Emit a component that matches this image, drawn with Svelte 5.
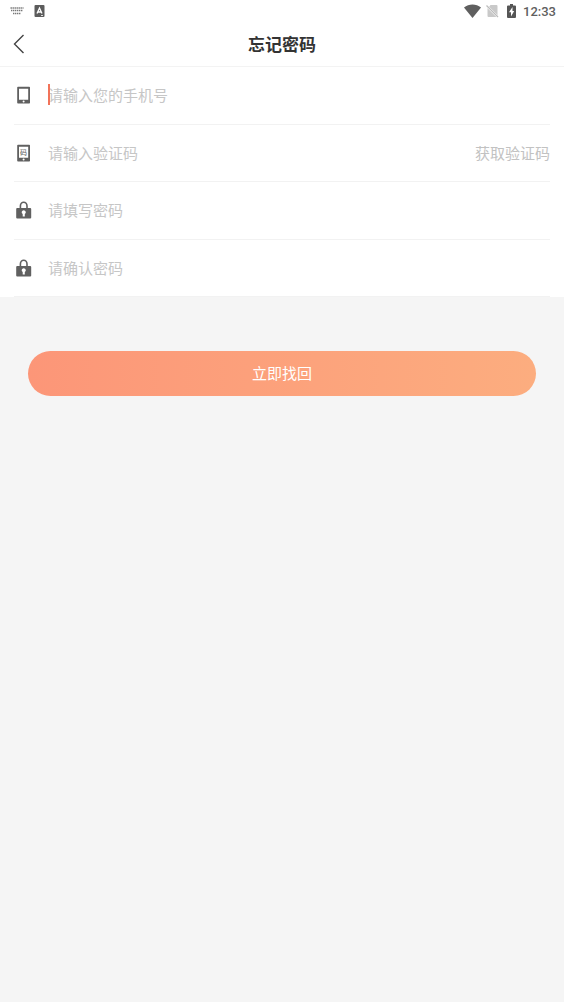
<script lang="ts">
  type Field = { id: string; label: string; type: string; icon: string; value: string };

  let fields = $state<Field[]>([
    { id: 'phone', label: '请输入您的手机号', type: 'tel', icon: 'phone', value: '' },
    { id: 'code', label: '请输入验证码', type: 'text', icon: 'code', value: '' },
    { id: 'password', label: '请填写密码', type: 'password', icon: 'lock', value: '' },
    { id: 'confirm', label: '请确认密码', type: 'password', icon: 'lock', value: '' }
  ]);
</script>

<div class="status">
  <svg width="14" height="8" viewBox="0 0 14 8" aria-hidden="true">
    <path d="M0.5 1h13M1 3.5h12M3 6.5h8" fill="none" stroke="#777" stroke-width="1.5" stroke-dasharray="1.4 .6" />
  </svg>
  <svg class="letter" width="11" height="12" viewBox="0 0 11 12" aria-hidden="true">
    <rect x=".5" width="10" height="12" rx="1" fill="#5c5c5c" />
    <path d="M3 8.5 5.5 3 8 8.5M3.8 7h3.4" fill="none" stroke="#fff" stroke-width="1.3" />
    <path d="M7 10.5h2" stroke="#ddd" />
  </svg>
  <span class="spacer"></span>
  <svg width="17" height="14" viewBox="0 0 17 14" aria-hidden="true">
    <path d="M0 3.6C4.8-.5 12.2-.5 17 3.6L8.5 14z" fill="#5f5f5f" />
  </svg>
  <svg class="signal" width="13" height="14" viewBox="0 0 13 14" aria-hidden="true">
    <path d="M4.5 1H10.5q1 0 1 1V11.5L3 3zM1.5 4 10.5 13H2.5q-1 0-1-1z" fill="#c9c9c9" />
    <path d="M1.5 2.500 12 13" stroke="#fff" stroke-width="1.800" />
    <path d="M.5 1.500 12 13" stroke="#bbb" stroke-width="1.200" />
  </svg>
  <svg class="battery" width="9" height="14" viewBox="0 0 9 14" aria-hidden="true">
    <path d="M3 0h3v1.5h2q1 0 1 1V13q0 1-1 1H1q-1 0-1-1V2.5q0-1 1-1h2z" fill="#565656" />
    <path d="M5.5 3 2 8.300h2V12.500l3.200-5.600H5.500z" fill="#fff" />
  </svg>
  <time>12:33</time>
</div>

<header>
  <button class="back" type="button" aria-label="返回">
    <svg width="12" height="20" viewBox="0 0 12 20" aria-hidden="true">
      <path d="M10.5 1 1.5 10l9 9" fill="none" stroke="#444" stroke-width="1.4" />
    </svg>
  </button>
  <h1>忘记密码</h1>
</header>

<form onsubmit={(e) => e.preventDefault()}>
  <div class="fields">
    {#each fields as field (field.id)}
      <div class="row">
        <label for={field.id} aria-label={field.label}>
          <svg width="20" height="20" viewBox="0 0 20 20" aria-hidden="true">
            {#if field.icon === 'lock'}
              <path d="M6.4 9V6a3.3 3.7 0 0 1 6.6 0v3" fill="none" stroke="#606060" stroke-width="1.6" />
              <rect x="2.2" y="8" width="15" height="10.5" rx="1" fill="#606060" />
              <path d="M9.7 10.2a2.1 2.1 0 0 1 1.1 3.9v2.3H8.7v-2.3A2.1 2.1 0 0 1 9.7 10.2z" fill="#fff" />
            {:else}
              <path fill-rule="evenodd" d="M4 1.700h11.200q.8 0 .8.8v15.200q0 .8-.8.8H4q-.8 0-.8-.8v-15.200q0-.8.8-.8zM5 3.700v11h9.200v-11z" fill="#606060" />
              <rect x="8.600" y="15.500" width="2" height="2" rx="1" fill="#fff" />
              {#if field.icon === 'code'}
                <text x="9.600" y="12" text-anchor="middle">码</text>
              {/if}
            {/if}
          </svg>
        </label>
        <div class="entry">
          <input id={field.id} type={field.type} placeholder={field.label} bind:value={field.value} />
          {#if field.id === 'phone'}<span class="caret"></span>{/if}
        </div>
        {#if field.id === 'code'}
          <button class="send" type="button">获取验证码</button>
        {/if}
      </div>
    {/each}
  </div>
  <button class="submit" type="submit">立即找回</button>
</form>

<style>
  :global(body) {
    background: #f5f5f5;
    font-family: "Noto Sans CJK SC", sans-serif;
  }

  button {
    border: 0;
    padding: 0;
    background: none;
    font: inherit;
    cursor: pointer;
  }

  svg {
    display: block;
    flex: none;
  }

  .status {
    display: flex;
    align-items: center;
    height: 22px;
    padding: 0 8px 0 10px;
    background: #fff;
  }

  .letter {
    margin-left: 10px;
  }

  .spacer {
    flex: 1;
  }

  .signal {
    margin-left: 5px;
  }

  .battery {
    margin: 0 7px 0 8px;
  }

  time {
    padding-top: 2px;
    color: #5f5f5f;
    font: 500 13px/20px Roboto, sans-serif;
  }

  header {
    display: grid;
    grid-template-columns: 48px 1fr 48px;
    align-items: center;
    height: 44px;
    border-bottom: 1px solid #f3f3f3;
    background: #fff;
  }

  .back {
    height: 44px;
    padding-left: 13px;
  }

  h1 {
    margin: 0;
    color: #333;
    font-size: 17px;
    font-weight: 700;
    line-height: 24px;
    text-align: center;
  }

  .fields {
    display: grid;
    grid-auto-rows: 1fr;
    height: 230px;
    padding: 0 14px;
    background: #fff;
  }

  .row {
    display: flex;
    align-items: center;
    border-bottom: 1px solid #f2f2f2;
    font-size: 15px;
    line-height: 22px;
  }

  .row text {
    fill: #707070;
    font-size: 7px;
    font-weight: 500;
  }

  .entry {
    position: relative;
    flex: 1;
    min-width: 0;
    margin-left: 14px;
  }

  input {
    display: block;
    box-sizing: border-box;
    width: 100%;
    height: 24px;
    padding: 0 0 1px;
    border: 0;
    outline: 0;
    background: none;
    color: #333;
    font: inherit;
    caret-color: #f0694b;
  }

  input::placeholder {
    color: #c6c6c6;
    opacity: 1;
  }

  .caret {
    position: absolute;
    top: 1px;
    left: 0;
    width: 2px;
    height: 21px;
    background: #f27359;
  }

  .send {
    color: #c2c2c2;
  }

  .submit {
    display: block;
    width: calc(100% - 56px);
    height: 45px;
    margin: 54px 28px;
    padding-bottom: 2px;
    border-radius: 23px;
    background: linear-gradient(90deg, #fc9678, #fcad7f);
    color: #fff;
    font-size: 15px;
  }
</style>
